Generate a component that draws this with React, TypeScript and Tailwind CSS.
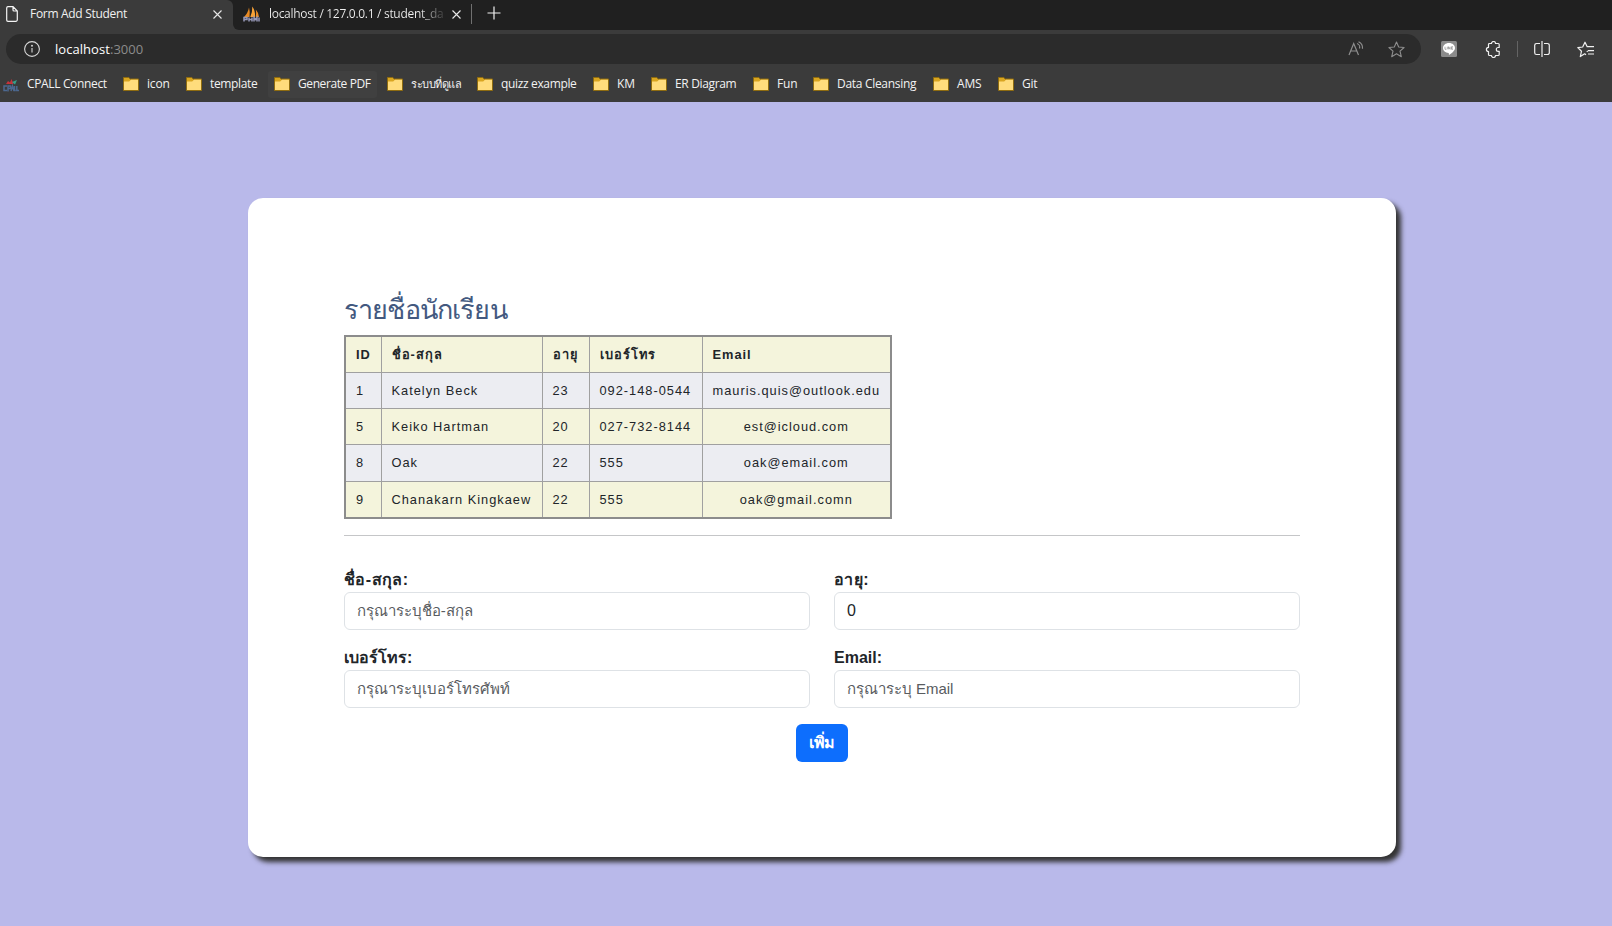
import React from "react";

type Bookmark = { label: string; item: string; text: string; hover?: boolean };

const bookmarks: Bookmark[] = [
  { label: "icon", item: "w-[63px]", text: "tracking-[-0.2px]" },
  { label: "template", item: "w-[88px]", text: "tracking-[-0.35px]" },
  { label: "Generate PDF", item: "w-[113px]", text: "tracking-[-0.4px]", hover: true },
  { label: "ระบบที่ดูแล", item: "w-[90px]", text: "text-[11px] font-medium tracking-[-0.5px]" },
  { label: "quizz example", item: "w-[116px]", text: "tracking-[-0.35px]" },
  { label: "KM", item: "w-[58px]", text: "tracking-[-0.2px]" },
  { label: "ER Diagram", item: "w-[102px]", text: "tracking-[-0.35px]" },
  { label: "Fun", item: "w-[60px]", text: "tracking-[-0.2px]" },
  { label: "Data Cleansing", item: "w-[120px]", text: "tracking-[-0.3px]" },
  { label: "AMS", item: "w-[65px]", text: "tracking-[-0.2px]" },
  { label: "Git", item: "w-[60px]", text: "tracking-[-0.2px]" },
];

const students = [
  ["1", "Katelyn Beck", "23", "092-148-0544", "mauris.quis@outlook.edu"],
  ["5", "Keiko Hartman", "20", "027-732-8144", "est@icloud.com"],
  ["8", "Oak", "22", "555", "oak@email.com"],
  ["9", "Chanakarn Kingkaew", "22", "555", "oak@gmail.comn"],
];

const rowHeights = ["h-[36px]", "h-[36px]", "h-[37px]", "h-[37px]"];

function Folder() {
  return (
    <svg className="h-4 w-4 shrink-0" viewBox="0 0 16 16">
      <path d="M.5 1.500h5.200l1.600 1.500h8.200v11.500H.5z" fill="#d9a520" stroke="#8f6c10" />
      <path d="M1 5.600h5.200L8 3.800h7V14H1z" fill="#ffdc7c" />
    </svg>
  );
}

function Close() {
  return (
    <svg className="h-[9px] w-[9px]" viewBox="0 0 9 9" stroke="#e8e8e8" strokeWidth="1.1">
      <path d="M.5.5l8 8M8.5.5l-8 8" />
    </svg>
  );
}

function Tabs() {
  return (
    <div className="flex h-[30px] bg-[#202020] text-[12px] text-[#f0f0f0]">
      <div className="flex h-[30px] w-[233px] items-center rounded-tr-[6px] bg-[#3b3b3b] pb-[2px] pl-[6px]">
        <svg className="h-4 w-3 shrink-0" viewBox="0 0 12 16" fill="none" stroke="#f4f4f4" strokeWidth="1.2">
          <path d="M2 .7h5l4.300 4.400v8.700a1.500 1.500 0 0 1-1.500 1.500H2A1.400 1.400 0 0 1 .7 13.900V2A1.400 1.400 0 0 1 2 .7zM7 .8v3.200a1 1 0 0 0 1 1h3.200" />
        </svg>
        <span className="ml-3 w-[183px] whitespace-nowrap tracking-[-0.3px]">Form Add Student</span>
        <Close />
      </div>
      <div className="w-[238px] bg-[#3b3b3b]">
        <div className="flex h-[30px] items-center rounded-bl-[6px] bg-[#202020] pb-[2px] pl-[10px]">
          <svg className="h-4 w-[17px] shrink-0" viewBox="0 0 17 16">
            <path d="M1 11Q5 7 6 1.500Q7.300 6 6.500 11z" fill="#e98a22" />
            <path d="M7.300 11Q9.500 6 9.300.500Q12.600 5 12 11z" fill="#f7a237" />
            <path d="M12.800 11Q13.500 7 12.800 3.500Q15.800 7 16 11z" fill="#e98a22" />
            <path d="M1 15.500v-4h3v2H1m5-2v4m0-2h3m0-2v4m2 0v-4l1.500 2 1.500-2v4m2-4v4" fill="none" stroke="#9698b8" strokeWidth="1.500" />
          </svg>
          <span className="ml-[9px] w-[177px] whitespace-nowrap bg-gradient-to-r from-[#f0f0f0] from-85% to-[#303030] bg-clip-text tracking-[-0.3px] text-transparent">
            localhost / 127.0.0.1 / student_da
          </span>
          <span className="ml-[6px]"><Close /></span>
        </div>
      </div>
      <div className="mt-1 h-5 w-px bg-[#707070]" />
      <svg className="ml-[15px] mt-[6px] h-[14px] w-[14px]" viewBox="0 0 14 14" stroke="#f0f0f0" strokeWidth="1.200">
        <path d="M7 .5v13M.5 7h13" />
      </svg>
    </div>
  );
}

function AddressBar() {
  return (
    <div className="flex h-[38px] items-center pl-[6px]">
      <div className="flex h-[30px] w-[1415px] items-center rounded-full bg-[#2b2b2b] pl-[18px]">
        <svg className="h-4 w-4" viewBox="0 0 16 16" fill="none" stroke="#d8d8d8" strokeWidth="1.100">
          <circle cx="8" cy="8" r="7.400" />
          <path d="M8 7v4.500" />
          <circle cx="8" cy="4.800" r=".4" fill="#d8d8d8" />
        </svg>
        <span className="ml-[15px] flex-1 pt-px text-[13px] tracking-[0.05px] text-white">
          localhost<span className="text-[#8c8c8c]">:3000</span>
        </span>
        <svg className="mr-6 h-4 w-4" viewBox="0 0 16 16" fill="none" stroke="#8e8e8e" strokeWidth="1.200">
          <path d="M1 14L5.700 2.500 10.500 14M2.700 10h6.200M9 2.500a4 4 0 0 1 2.500 5M10.500.7a7 7 0 0 1 4 7" />
        </svg>
        <svg className="mr-4 h-[17px] w-[17px]" viewBox="0 0 17 17" fill="none" stroke="#8e8e8e" strokeWidth="1.100" strokeLinejoin="round">
          <path d="M8.500 1l2.200 5 5.400.5-4.100 3.600 1.300 5.600-4.800-2.900-4.800 2.900L5 10.100.9 6.500 6.300 6z" />
        </svg>
      </div>
      <svg className="ml-5 h-4 w-4" viewBox="0 0 16 16">
        <rect width="16" height="16" rx="1.500" fill="#8b8b8b" />
        <path d="M8 2c3.500 0 6 2.200 6 5 0 2.500-3 5.200-6 7-.2-1 0-1.600-.5-2C4.500 11.700 2 9.800 2 7c0-2.800 2.500-5 6-5z" fill="#fff" />
        <path d="M4 5.700v2.600h1.400M6.300 5.700v2.600M7.500 8.300V5.700l1.600 2.600V5.700M12 5.700h-1.500v2.600H12M10.500 7H12" fill="none" stroke="#8b8b8b" strokeWidth=".7" />
      </svg>
      <svg className="ml-[28px] h-[17px] w-4" viewBox="0 0 16 17" fill="none" stroke="#f0f0f0" strokeWidth="1.200" strokeLinejoin="round">
        <path d="M3.500 3.500A1 1 0 0 1 4.500 2.500h2a2 2 0 0 1 4 0h2.700a1 1 0 0 1 1 1v3h-1a1.900 1.900 0 0 0 0 3.800h1v3.200a1 1 0 0 1-1 1h-2.700a2 2 0 0 1-4 0h-2a1 1 0 0 1-1-1v-2.900a2.100 2.100 0 0 1 0-4.200z" />
      </svg>
      <div className="ml-[16px] h-4 w-px bg-[#646464]" />
      <svg className="ml-4 h-4 w-4" viewBox="0 0 16 16" fill="none" stroke="#f0f0f0" strokeWidth="1.200">
        <path d="M8 0v16M6 2.500H2.500A1.800 1.800 0 0 0 .7 4.300v7.400a1.800 1.800 0 0 0 1.800 1.800H6M10 2.500h3.500a1.800 1.800 0 0 1 1.800 1.800v7.400a1.800 1.800 0 0 1-1.800 1.800H10" />
      </svg>
      <svg className="ml-[27px] h-[17px] w-[17px]" viewBox="0 0 17 17" fill="none" stroke="#f0f0f0" strokeWidth="1.200" strokeLinejoin="round">
        <path d="M9 13.700l-1.300-.9L3.300 15.600l1.200-5.400L.8 6.600 5.700 6 8 1.200 10.200 5.700H17M11 9.700h6M11 13h6M10.800 9.800l-1 1" />
      </svg>
    </div>
  );
}

function Bookmarks() {
  return (
    <div className="flex h-[34px] items-center overflow-hidden pb-[2px] pl-[3px] text-[12px] text-[#f2f2f2]">
      <div className="flex w-[120px] shrink-0 items-center gap-2 whitespace-nowrap">
        <svg className="h-4 w-4 shrink-0" viewBox="0 0 16 16" fill="none">
          <path d="M3 8l2-3 2 1.500L8.500 3l2 5z" fill="#c8323a" />
          <path d="M9 6l5-2-2 4.500z" fill="#35a08b" />
          <path d="M4 10H1v4.500h3m1 1V10h2.500v2.500H5m3 2.500l1.500-5 1.500 5m.5-5v4.500h1.300m1-4.500v4.500H16" stroke="#4c6890" strokeWidth="1.500" />
        </svg>
        <span className="tracking-[-0.35px]">CPALL Connect</span>
      </div>
      {bookmarks.map((b) => (
        <div key={b.label} className={`flex shrink-0 items-center whitespace-nowrap ${b.item}`}>
          <div className={`-ml-[6px] flex h-[27px] items-center gap-2 rounded-[3px] px-[6px] ${b.hover ? "bg-[#404040]" : ""}`}>
            <Folder />
            <span className={b.text}>{b.label}</span>
          </div>
        </div>
      ))}
    </div>
  );
}

type FieldProps = { label: string; labelStyle?: string; placeholder?: string; value?: string };

function Field({ label, labelStyle = "", placeholder, value }: FieldProps) {
  return (
    <label className="block">
      <span className={`block h-6 font-bold leading-6 ${labelStyle}`}>{label}</span>
      <input
        className="block h-[38px] w-full rounded-[6px] border border-[#dee2e6] bg-white px-3 text-[#212529] placeholder:text-[15px] placeholder:tracking-[-0.02px] placeholder:text-[#595c5f]"
        placeholder={placeholder}
        defaultValue={value}
      />
    </label>
  );
}

export default function App() {
  return (
    <div className="flex h-[926px] w-[1612px] flex-col overflow-hidden bg-[#b9b9ea]">
      <header className="h-[102px] shrink-0 bg-[#3b3b3b] font-['Open_Sans','Noto_Sans',sans-serif]">
        <Tabs />
        <AddressBar />
        <Bookmarks />
      </header>
      <main className="ml-[248px] mt-24 h-[659px] w-[1148px] rounded-[15px] bg-white px-24 pt-[95px] font-['Liberation_Sans','Noto_Sans',sans-serif] text-base text-[#212529] shadow-[5px_5px_5px_#333]">
        <h1 className="h-[42px] whitespace-nowrap text-[27px] leading-[34px] tracking-[-0.85px] text-[#43597f]">รายชื่อนักเรียน</h1>
        <table className="w-[547px] table-fixed border-collapse border-2 border-[#8c8c8c] text-[12.8px] tracking-[1px]">
          <colgroup>
            <col className="w-[36px]" />
            <col className="w-[161px]" />
            <col className="w-[47px]" />
            <col className="w-[113px]" />
            <col className="w-[189px]" />
          </colgroup>
          <thead>
            <tr className="h-[36px] bg-[#f4f4dc]">
              {["ID", "ชื่อ-สกุล", "อายุ", "เบอร์โทร", "Email"].map((h) => (
                <th key={h} className="whitespace-nowrap border border-[#a0a0a0] px-[10px] pb-0 pt-px text-left font-bold leading-5">{h}</th>
              ))}
            </tr>
          </thead>
          <tbody>
            {students.map((s, row) => (
              <tr key={s[0]} className={`odd:bg-[#ecedf2] even:bg-[#f4f4dc] ${rowHeights[row]}`}>
                {s.map((v, i) => (
                  <td key={i} className="whitespace-nowrap border border-[#a0a0a0] px-[10px] pb-0 pt-px leading-5 last:text-center">{v}</td>
                ))}
              </tr>
            ))}
          </tbody>
        </table>
        <hr className="mt-4 border-[#c5c6c8]" />
        <form className="mt-8">
          <div className="grid grid-cols-2 gap-x-6 gap-y-4">
            <Field label="ชื่อ-สกุล:" labelStyle="tracking-[0.4px]" placeholder="กรุณาระบุชื่อ-สกุล" />
            <Field label="อายุ:" labelStyle="tracking-[0.4px]" value="0" />
            <Field label="เบอร์โทร:" placeholder="กรุณาระบุเบอร์โทรศัพท์" />
            <Field label="Email:" placeholder="กรุณาระบุ Email" />
          </div>
          <div className="mt-4 flex justify-center">
            <button type="button" className="h-[38px] w-[52px] rounded-[6px] bg-[#0d6efd] text-center font-semibold tracking-[-0.4px] text-white">เพิ่ม</button>
          </div>
        </form>
      </main>
    </div>
  );
}
